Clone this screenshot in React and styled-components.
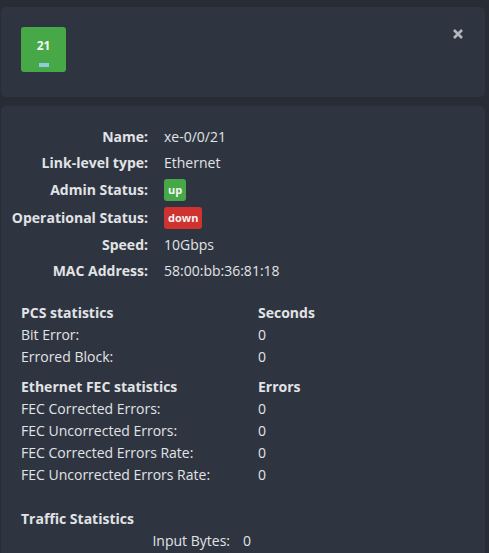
import React from "react";
import styled, { createGlobalStyle } from "styled-components";

const GlobalStyle = createGlobalStyle`
  html, body {
    margin: 0;
    padding: 0;
    background: #282c34;
    font-family: "Open Sans", "Noto Sans", sans-serif;
    font-size: 14px;
    color: #e1e3e6;
    overflow: hidden;
  }
`;

const Page = styled.div`
  display: flex;
  flex-direction: column;
  gap: 9px;
  padding: 7px 4px 0 1px;
  height: 553px;
  box-sizing: border-box;
`;

const Panel = styled.div`
  background: #2f3540;
  border-radius: 5px;
`;

const Header = styled(Panel)`
  display: flex;
  justify-content: space-between;
  align-items: flex-start;
  padding: 20px 20px 25px 20px;
`;

const PortTile = styled.div`
  width: 45px;
  height: 45px;
  border-radius: 3px;
  background: #47a847;
  display: flex;
  flex-direction: column;
  align-items: center;
  box-sizing: border-box;
  padding-top: 11px;
`;

const PortNumber = styled.div`
  font-size: 12px;
  font-weight: 700;
  line-height: 16px;
  color: #f4f4f4;
`;

const PortLed = styled.div`
  width: 10px;
  height: 4px;
  margin-top: 9px;
  background: #8fcbdc;
`;

const CloseButton = styled.button`
  border: none;
  background: none;
  padding: 0;
  margin: 2px 2px 0 0;
  cursor: pointer;
  display: flex;
`;

const Body = styled(Panel)`
  flex: 1;
  padding: 18px 0 0 0;
  border-bottom-left-radius: 0;
  border-bottom-right-radius: 0;
`;

const DetailsGrid = styled.div`
  display: grid;
  grid-template-columns: 147px auto;
  column-gap: 16px;
  align-items: center;
`;

const DetailLabel = styled.div`
  font-weight: 700;
  text-align: right;
  line-height: 20px;
  padding: ${(p) => (p.$tall ? "4px" : "3px")} 0;
  white-space: nowrap;
`;

const DetailValue = styled.div`
  line-height: 20px;
  padding: 3px 0;
  display: flex;
  align-items: center;
`;

const Badge = styled.span`
  display: inline-block;
  font-size: 11px;
  font-weight: 700;
  line-height: 14px;
  padding: 4px 4px;
  border-radius: 3px;
  color: #f4f4f4;
  background: ${(p) => (p.$state === "up" ? "#47a847" : "#d0322f")};
`;

const Stats = styled.div`
  padding: 18px 20px 0 20px;
`;

const StatGroup = styled.div`
  display: grid;
  grid-template-columns: 237px auto;
  margin-top: ${(p) => p.$gap || 0}px;
`;

const StatCell = styled.div`
  line-height: 22px;
  font-weight: ${(p) => (p.$head ? 700 : 400)};
  white-space: nowrap;
`;

const TrafficGrid = styled.div`
  display: grid;
  grid-template-columns: 209px auto;
  column-gap: 13px;
`;

const TrafficLabel = styled.div`
  text-align: right;
  line-height: 22px;
`;

const details = [
  { label: "Name:", value: "xe-0/0/21" },
  { label: "Link-level type:", value: "Ethernet" },
  { label: "Admin Status:", badge: "up" },
  { label: "Operational Status:", badge: "down" },
  { label: "Speed:", value: "10Gbps" },
  { label: "MAC Address:", value: "58:00:bb:36:81:18" },
];

const statGroups = [
  {
    title: "PCS statistics",
    unit: "Seconds",
    rows: [
      ["Bit Error:", "0"],
      ["Errored Block:", "0"],
    ],
  },
  {
    title: "Ethernet FEC statistics",
    unit: "Errors",
    gap: 8,
    rows: [
      ["FEC Corrected Errors:", "0"],
      ["FEC Uncorrected Errors:", "0"],
      ["FEC Corrected Errors Rate:", "0"],
      ["FEC Uncorrected Errors Rate:", "0"],
    ],
  },
];

const CloseIcon = () => (
  <svg width="10" height="10" viewBox="0 0 10 10">
    <path d="M1 1 L9 9 M9 1 L1 9" stroke="#b3b7bc" strokeWidth="2.6" strokeLinecap="butt" />
  </svg>
);

export default function App() {
  return (
    <>
      <GlobalStyle />
      <Page>
        <Header>
          <PortTile>
            <PortNumber>21</PortNumber>
            <PortLed />
          </PortTile>
          <CloseButton aria-label="Close">
            <CloseIcon />
          </CloseButton>
        </Header>

        <Body>
          <DetailsGrid>
            {details.map((d) => (
              <React.Fragment key={d.label}>
                <DetailLabel $tall={!!d.badge}>{d.label}</DetailLabel>
                <DetailValue>
                  {d.badge ? <Badge $state={d.badge}>{d.badge}</Badge> : d.value}
                </DetailValue>
              </React.Fragment>
            ))}
          </DetailsGrid>

          <Stats>
            {statGroups.map((g) => (
              <StatGroup key={g.title} $gap={g.gap}>
                <StatCell $head>{g.title}</StatCell>
                <StatCell $head>{g.unit}</StatCell>
                {g.rows.map(([k, v]) => (
                  <React.Fragment key={k}>
                    <StatCell>{k}</StatCell>
                    <StatCell>{v}</StatCell>
                  </React.Fragment>
                ))}
              </StatGroup>
            ))}

            <StatGroup $gap={22}>
              <StatCell $head>Traffic Statistics</StatCell>
            </StatGroup>
            <TrafficGrid>
              <TrafficLabel>Input Bytes:</TrafficLabel>
              <StatCell>0</StatCell>
            </TrafficGrid>
          </Stats>
        </Body>
      </Page>
    </>
  );
}
